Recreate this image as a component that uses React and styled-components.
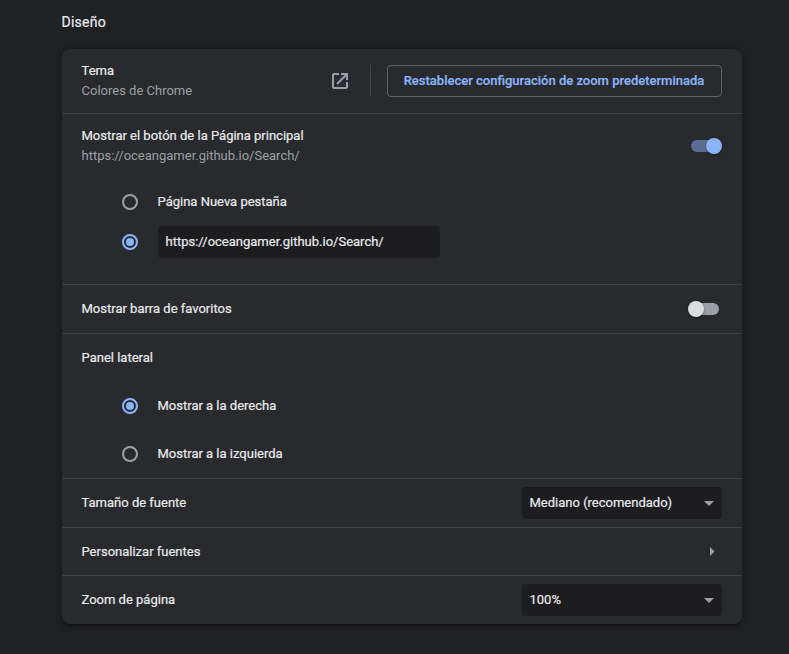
import React from "react";
import styled, { createGlobalStyle } from "styled-components";

const GlobalStyle = createGlobalStyle`
  * { box-sizing: border-box; }
  body {
    margin: 0;
    background: #202124;
    color: #e8eaed;
    font-family: Roboto, "Liberation Sans", sans-serif;
    font-size: 13px;
    line-height: 20px;
    -webkit-text-stroke: 0.2px;
  }
`;

const Page = styled.main`
  width: 789px;
  height: 654px;
  overflow: hidden;
  padding: 12px 47px 0 62px;
`;

const Heading = styled.h2`
  margin: 0 0 17px -0.5px;
  font-size: 14px;
  font-weight: 400;
  line-height: 20px;
  letter-spacing: 0.25px;
`;

const Card = styled.section`
  width: 680px;
  border-radius: 8px;
  background: #292a2d;
  box-shadow: 0 1px 2px rgba(0, 0, 0, 0.3), 0 2px 6px 2px rgba(0, 0, 0, 0.15);
`;

const Row = styled.div`
  display: flex;
  align-items: center;
  height: ${(p) => p.$height || 48}px;
  padding: 0 20px 0 19.5px;
`;

const Group = styled.div`
  height: ${(p) => p.$height}px;
`;

const Divided = styled.div`
  & + & {
    border-top: 1px solid #3f4042;
  }
`;

const Label = styled.div`
  flex: 1;
`;

const Secondary = styled.div`
  color: #9aa0a6;
  -webkit-text-stroke: 0;
`;

const Separator = styled.div`
  width: 1px;
  height: 32px;
  margin: 0 16px 0 20px;
  background: #3f4042;
`;

const OutlineButton = styled.button`
  width: 335px;
  height: 32px;
  padding: 0 1px 1px 0;
  border: 1px solid #5f6368;
  border-radius: 4px;
  background: transparent;
  color: #8ab4f8;
  font: 500 13px/20px Roboto, sans-serif;
  white-space: nowrap;
`;

const Track = styled.span`
  display: flex;
  align-items: center;
  width: 28px;
  height: 12px;
  margin-right: 3px;
  border-radius: 6px;
  background: ${(p) => (p.$on ? "#5a6e94" : "#9aa0a6")};
`;

const Knob = styled.span`
  flex: none;
  width: 16px;
  height: 16px;
  margin-left: ${(p) => (p.$on ? 15 : -3)}px;
  border-radius: 50%;
  background: ${(p) => (p.$on ? "#8ab4f8" : "#dadce0")};
  box-shadow: 0 1px 3px rgba(0, 0, 0, 0.4);
`;

const RadioRow = styled.div`
  display: flex;
  align-items: center;
  height: ${(p) => p.$height}px;
  padding-left: 60px;
`;

const RadioDot = styled.span`
  display: grid;
  place-items: center;
  width: 16px;
  height: 16px;
  margin-right: ${(p) => (p.$field ? 20 : 19.5)}px;
  border: 2px solid ${(p) => (p.$checked ? "#8ab4f8" : "#9aa0a6")};
  border-radius: 50%;

  &::after {
    content: "";
    width: 8px;
    height: 8px;
    border-radius: 50%;
    background: ${(p) => (p.$checked ? "#8ab4f8" : "transparent")};
  }
`;

const Field = styled.div`
  width: 282px;
  height: 32px;
  padding: 6px 8px 6px 7.5px;
  border-radius: 4px;
  background: #1d1d1f;
`;

const SelectBox = styled.div`
  display: flex;
  align-items: center;
  justify-content: space-between;
  width: 200px;
  height: 32px;
  padding: 0 8px 0 7.5px;
  border-radius: 4px;
  background: #1d1d1f;
`;

const Arrow = styled.svg`
  display: block;
  fill: #9aa0a6;
  margin-right: ${(p) => p.$inset || 0}px;
`;

function Toggle({ on }) {
  return (
    <Track $on={on} role="switch" aria-checked={!!on}>
      <Knob $on={on} />
    </Track>
  );
}

function Radio({ checked, field, height, children }) {
  return (
    <RadioRow $height={height} role="radio" aria-checked={!!checked}>
      <RadioDot $checked={checked} $field={field} />
      {children}
    </RadioRow>
  );
}

function Select({ value }) {
  return (
    <SelectBox>
      <span>{value}</span>
      <Arrow width="10" height="5" viewBox="0 0 10 5">
        <path d="M0 0h10L5 5z" />
      </Arrow>
    </SelectBox>
  );
}

export default function App() {
  return (
    <>
      <GlobalStyle />
      <Page>
        <Heading>Diseño</Heading>
        <Card>
          <Divided>
            <Row $height={64}>
              <Label>
                Tema
                <Secondary>Colores de Chrome</Secondary>
              </Label>
              <Arrow width="20" height="20" viewBox="0 0 20 20">
                <path d="M4 2h5v2H4v12h12v-5h2v5c0 1.1-.9 2-2 2H4c-1.1 0-2-.9-2-2V4c0-1.1.9-2 2-2zM11 2h7v7h-2V5.4l-8.3 8.3-1.4-1.4L14.6 4H11z" />
              </Arrow>
              <Separator />
              <OutlineButton>Restablecer configuración de zoom predeterminada</OutlineButton>
            </Row>
          </Divided>
          <Divided>
            <Group $height={170}>
              <Row $height={64}>
                <Label>
                  Mostrar el botón de la Página principal
                  <Secondary>https://oceangamer.github.io/Search/</Secondary>
                </Label>
                <Toggle on />
              </Row>
              <Radio height={48}>Página Nueva pestaña</Radio>
              <Radio height={32} checked field>
                <Field>https://oceangamer.github.io/Search/</Field>
              </Radio>
            </Group>
          </Divided>
          <Divided>
            <Row>
              <Label>Mostrar barra de favoritos</Label>
              <Toggle />
            </Row>
          </Divided>
          <Divided>
            <Row>
              <Label>Panel lateral</Label>
            </Row>
            <Radio height={48} checked>Mostrar a la derecha</Radio>
            <Radio height={48}>Mostrar a la izquierda</Radio>
          </Divided>
          <Divided>
            <Row>
              <Label>Tamaño de fuente</Label>
              <Select value="Mediano (recomendado)" />
            </Row>
          </Divided>
          <Divided>
            <Row $height={47}>
              <Label>Personalizar fuentes</Label>
              <Arrow $inset={7} width="5" height="9" viewBox="0 0 5 9">
                <path d="M0 0v9l4.5-4.5z" />
              </Arrow>
            </Row>
          </Divided>
          <Divided>
            <Row>
              <Label>Zoom de página</Label>
              <Select value="100%" />
            </Row>
          </Divided>
        </Card>
      </Page>
    </>
  );
}
